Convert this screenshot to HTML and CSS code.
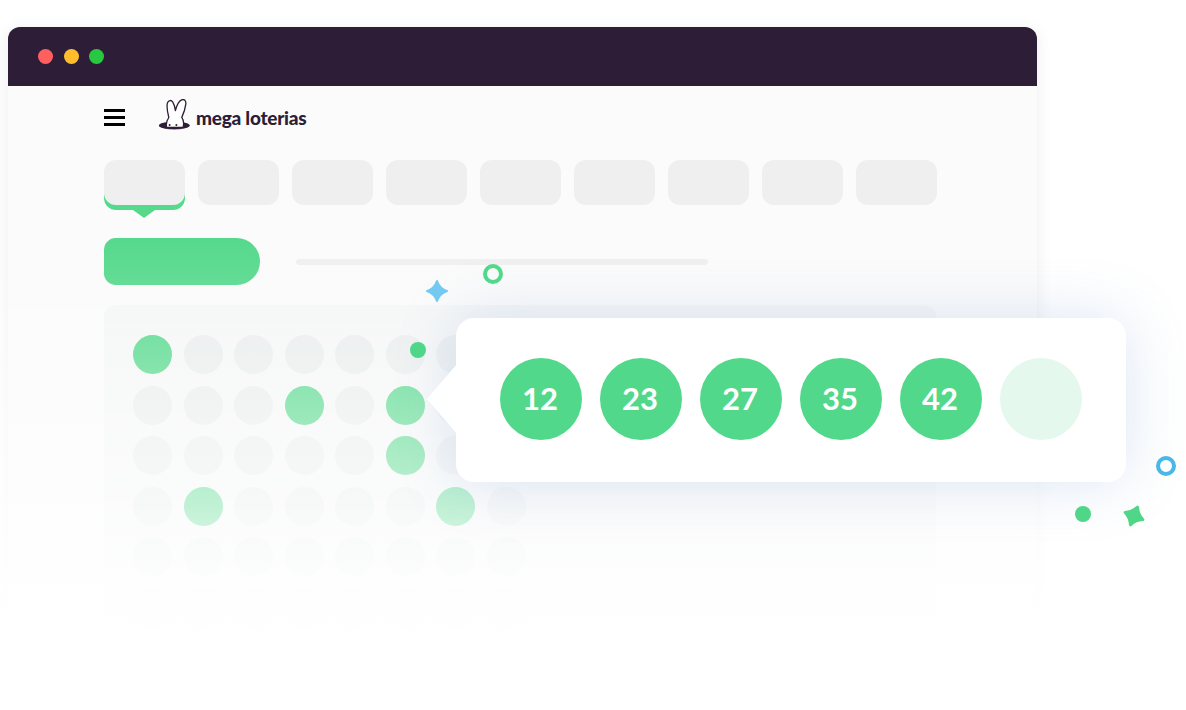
FILE: index.html
```html
<!DOCTYPE html>
<html lang="pt">
<head>
    <meta charset="UTF-8">
    <meta name="viewport" content="width=device-width, initial-scale=1.0">
    <title>Mega Loterias</title>
    <link rel="stylesheet" href="styles.css">
</head>
<body>
    <div class="stage">
        <div class="window">
            <div class="titlebar">
                <span class="light light-red"></span>
                <span class="light light-yellow"></span>
                <span class="light light-green"></span>
            </div>
            <div class="content">
                <div class="nav">
                    <div class="burger"><span></span><span></span><span></span></div>
                    <div class="logo">
                        <svg class="logo-mark" width="34" height="32" viewBox="0 0 34 32">
                            <ellipse cx="16.3" cy="26.4" rx="15.4" ry="3.8" fill="#2d1d36"/>
                            <path d="M8.6 28.4 C7.6 24 9.4 20.5 10.8 18.5 C9.4 13 8.6 7.5 9.4 4.2 C10.2 1 13.2 .6 14.8 3.2 C16.2 5.6 17 8.4 17.4 11.6 C18.6 7 20.6 2.2 23.6 .9 C26.6 -.2 28.2 1.8 27.8 5.2 C27.2 10 25.6 14.6 23.8 18.4 C25.6 21 26 25 25 28.4 Z" fill="#fff" stroke="#2d1d36" stroke-width="1.3" stroke-linejoin="round"/>
                            <path d="M5 26 C6 27.9 8 29 8.6 29.2 L25 29.2 C27 28.8 28.5 27.4 29.5 26 L31.6 26.4 C30 29.4 23 30.2 16.3 30.2 C9 30.2 2.5 29.4 1 26.4 Z" fill="#2d1d36"/>
                            <circle cx="11.6" cy="26" r="1" fill="#2d1d36"/>
                            <circle cx="18.4" cy="26" r="1" fill="#2d1d36"/>
                        </svg>
                        <span class="logo-text">mega loterias</span>
                    </div>
                </div>

                <div class="tabs">
                    <div class="tab tab-active"></div>
                    <div class="tab"></div>
                    <div class="tab"></div>
                    <div class="tab"></div>
                    <div class="tab"></div>
                    <div class="tab"></div>
                    <div class="tab"></div>
                    <div class="tab"></div>
                    <div class="tab"></div>
                </div>

                <div class="actions">
                    <div class="action-btn"></div>
                    <div class="action-line"></div>
                </div>

                <div class="panel">
                    <div class="dots">
                        <span class="dot on"></span><span class="dot"></span><span class="dot"></span><span class="dot"></span><span class="dot"></span><span class="dot"></span><span class="dot"></span><span class="dot"></span>
                        <span class="dot"></span><span class="dot"></span><span class="dot"></span><span class="dot on"></span><span class="dot"></span><span class="dot on"></span><span class="dot"></span><span class="dot"></span>
                        <span class="dot"></span><span class="dot"></span><span class="dot"></span><span class="dot"></span><span class="dot"></span><span class="dot on"></span><span class="dot"></span><span class="dot"></span>
                        <span class="dot"></span><span class="dot on"></span><span class="dot"></span><span class="dot"></span><span class="dot"></span><span class="dot"></span><span class="dot on"></span><span class="dot"></span>
                        <span class="dot"></span><span class="dot"></span><span class="dot"></span><span class="dot"></span><span class="dot"></span><span class="dot"></span><span class="dot"></span><span class="dot"></span>
                        <span class="dot"></span><span class="dot"></span><span class="dot"></span><span class="dot"></span><span class="dot"></span><span class="dot"></span><span class="dot"></span><span class="dot"></span>
                    </div>
                </div>
            </div>
        </div>

        <div class="popup">
            <div class="ball">12</div>
            <div class="ball">23</div>
            <div class="ball">27</div>
            <div class="ball">35</div>
            <div class="ball">42</div>
            <div class="ball ball-empty"></div>
        </div>

        <!-- decorations -->
        <span class="ring ring-green"></span>
        <span class="ring ring-blue"></span>
        <span class="spot spot-top"></span>
        <span class="spot spot-bottom"></span>
        <svg class="spark spark-blue" width="24" height="24" viewBox="0 0 24 24">
            <path d="M12 2 Q14.6 9.4 22 12 Q14.6 14.6 12 22 Q9.4 14.6 2 12 Q9.4 9.4 12 2 Z" fill="#74c9f2" stroke="#74c9f2" stroke-width="2" stroke-linejoin="round"/>
        </svg>
        <svg class="spark spark-green" width="24" height="24" viewBox="0 0 24 24">
            <path d="M12 2.5 Q15 9 21.5 12 Q15 15 12 21.5 Q9 15 2.5 12 Q9 9 12 2.5 Z" fill="#4fd688" stroke="#4fd688" stroke-width="3" stroke-linejoin="round"/>
        </svg>
    </div>
</body>
</html>
```

FILE: styles.css
```css
* {
    margin: 0;
    padding: 0;
    box-sizing: border-box;
}

body {
    background: #fff;
    font-family: 'Lato', 'Liberation Sans', sans-serif;
    overflow: hidden;
}

.stage {
    position: relative;
    width: 1186px;
    height: 710px;
    padding: 27px 0 0 8px;
    overflow: hidden;
}

.window {
    position: relative;
    width: 1029px;
    height: 613px;
    border-radius: 12px 12px 0 0;
    background: #fbfbfb;
    box-shadow: 0 2px 16px rgba(40, 30, 60, 0.08);
}

/* whole window fades out to white going down */
.window::after {
    content: '';
    position: absolute;
    left: -24px;
    right: -24px;
    top: 211px;
    bottom: -24px;
    background: linear-gradient(to bottom, rgba(255,255,255,0) 0%, rgba(255,255,255,0.12) 16%, rgba(255,255,255,0.62) 62%, rgba(255,255,255,0.93) 84%, #fff 100%);
}

.titlebar {
    display: flex;
    align-items: center;
    gap: 10.5px;
    height: 59px;
    padding-left: 30px;
    background: #2d1d36;
    border-radius: 12px 12px 0 0;
}

.light {
    width: 15px;
    height: 15px;
    border-radius: 50%;
}

.light-red { background: #ff5f5f; }
.light-yellow { background: #ffbd2e; }
.light-green { background: #28c940; }

.content {
    padding: 13px 0 0 96px;
}

.nav {
    display: flex;
    align-items: center;
    height: 32px;
}

.burger {
    display: flex;
    flex-direction: column;
    gap: 4px;
    width: 21px;
    margin-top: 5px;
    margin-right: 34px;
}

.burger span {
    height: 3px;
    background: #000;
}

.logo {
    display: flex;
    align-items: center;
}

.logo-mark {
    display: block;
    margin-left: -1px;
    margin-right: 4px;
}

.logo-text {
    font-size: 19px;
    font-weight: 900;
    letter-spacing: -0.25px;
    color: #2d1d36;
    margin-top: 5px;
}

.tabs {
    display: flex;
    gap: 13px;
    margin-top: 29px;
}

.tab {
    position: relative;
    width: 81px;
    height: 45px;
    background: #efefef;
    border-radius: 12px;
}

.tab-active {
    box-shadow: 0 5px 0 #56d98c;
}

.tab-active::after {
    content: '';
    position: absolute;
    left: 29px;
    top: 50px;
    border-left: 11px solid transparent;
    border-right: 11px solid transparent;
    border-top: 8px solid #56d98c;
}

.actions {
    display: flex;
    align-items: center;
    margin-top: 33px;
}

.action-btn {
    width: 156px;
    height: 47px;
    background: #56d98c;
    border-radius: 12px 24px 24px 12px;
}

.action-line {
    width: 412px;
    height: 6px;
    margin-left: 36px;
    background: #efefef;
    border-radius: 3px;
}

.panel {
    width: 832px;
    height: 340px;
    margin-top: 20px;
    padding: 30px 29px;
    background: #f5f6f6;
    border-radius: 12px;
}

.dots {
    display: grid;
    grid-template-columns: repeat(8, 39px);
    grid-auto-rows: 39px;
    gap: 11.5px;
}

.dot {
    border-radius: 50%;
    background: #eaeded;
}

.dot.on {
    background: #56d98c;
}

.popup {
    position: absolute;
    left: 456px;
    top: 318px;
    display: flex;
    gap: 18px;
    width: 670px;
    height: 164px;
    padding: 40px 44px;
    background: #fff;
    border-radius: 18px;
    box-shadow: 0 0 60px rgba(110, 150, 215, 0.24);
}

.popup::before {
    content: '';
    position: absolute;
    left: -29px;
    top: 46px;
    width: 30px;
    height: 70px;
    background: #fff;
    clip-path: polygon(0 50%, 100% 0, 100% 100%);
}

.ball {
    display: flex;
    align-items: center;
    justify-content: center;
    width: 82px;
    height: 82px;
    padding: 0 2px 2px 0;
    border-radius: 50%;
    background: #52d88a;
    color: #fff;
    font-size: 31px;
    font-weight: 700;
}

.ball-empty {
    background: #e4f8ed;
}

.ring, .spot, .spark {
    position: absolute;
}

.ring {
    width: 20px;
    height: 20px;
    border-radius: 50%;
    border: 4px solid;
}

.ring-green {
    left: 483px;
    top: 264px;
    border-color: #52d88a;
}

.ring-blue {
    left: 1156px;
    top: 456px;
    border-color: #4ab8e6;
}

.spot {
    border-radius: 50%;
    background: #4fd688;
}

.spot-top {
    left: 410px;
    top: 342px;
    width: 16px;
    height: 16px;
}

.spot-bottom {
    left: 1075px;
    top: 506px;
    width: 16px;
    height: 16px;
}

.spark-blue {
    left: 424.5px;
    top: 279px;
}

.spark-green {
    left: 1122px;
    top: 503.5px;
    transform: rotate(22deg);
}
```
